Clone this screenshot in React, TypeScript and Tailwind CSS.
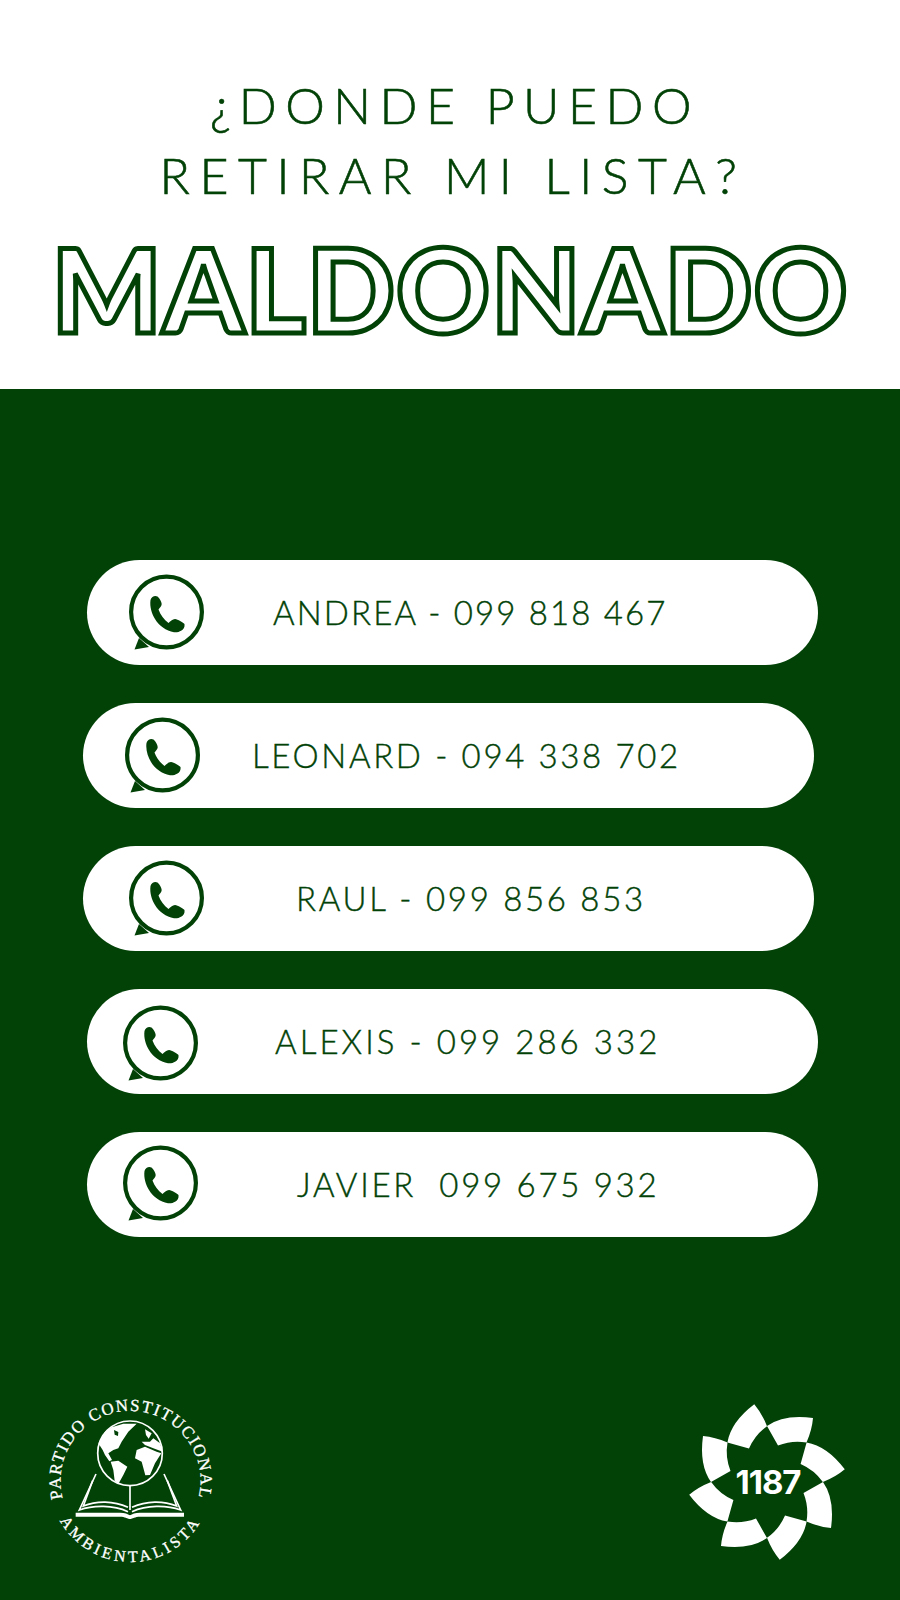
const GREEN = "#024207";

const contacts = [
  { label: "ANDREA - 099 818 467", pill: "ml-[87px]", icon: "ml-[41px]", text: "ml-[69px] tracking-[0.065em]", iconTop: "mt-[2px]" },
  { label: "LEONARD - 094 338 702", pill: "ml-[83px]", icon: "ml-[41px]", text: "ml-[52px] tracking-[0.08em]", iconTop: "mt-[2px]" },
  { label: "RAUL - 099 856 853", pill: "ml-[83px]", icon: "ml-[45px]", text: "ml-[92px] tracking-[0.082em]", iconTop: "mt-[2px]" },
  { label: "ALEXIS - 099 286 332", pill: "ml-[87px]", icon: "ml-[35px]", text: "ml-[77px] tracking-[0.092em]", iconTop: "mt-[6px]" },
  { label: "JAVIER  099 675 932", pill: "ml-[87px]", icon: "ml-[35px]", text: "ml-[99px] tracking-[0.082em]", iconTop: "mt-0" },
];

const WhatsappIcon = ({ className }: { className?: string }) => (
  <svg viewBox="0 0 76 76" className={`overflow-visible ${className}`} fill={GREEN}>
    <path d="M11 62 L6.5 73.5 L21 71 Z" />
    <circle cx="38.5" cy="36" r="35.4" fill="#fff" stroke={GREEN} strokeWidth="4.2" />
    <path d="M22.5 24 C23.5 20.5 27 19 29.5 20.5 C31.5 22 33.5 25.5 33.7 28 C33.8 30 31.5 32 30.5 33.5 C32.5 39 36 43.5 40.5 47 C42 45.5 44.5 43 47 43 C50 43.5 54.5 46 56.5 48 C57 51 55.5 53.5 53.5 54.5 C51 56 49 56.5 46 56.3 C38 55 31 49.5 27 43 C24 38 21.5 31 22.5 24 Z" />
  </svg>
);

const PartyLogo = () => (
  <svg viewBox="0 0 210 190" className="h-[190px] w-[210px]" fill="#fff">
    <defs>
      <path id="arc-top" d="M100.5 171 A70 70 0 1 1 100.5 31 A70 70 0 1 1 100.5 171" />
      <path id="arc-bottom" d="M100.5 20 A81 81 0 1 0 100.5 182 A81 81 0 1 0 100.5 20" />
    </defs>
    <g fontFamily="'Liberation Serif', serif" textAnchor="middle" stroke="#fff" strokeWidth="0.3">
      <text fontSize="17" letterSpacing="1.4">
        <textPath href="#arc-top" startOffset="50%">PARTIDO CONSTITUCIONAL</textPath>
      </text>
      <text fontSize="16" letterSpacing="3.4">
        <textPath href="#arc-bottom" startOffset="50%">AMBIENTALISTA</textPath>
      </text>
    </g>
    {/* book, traced from a 3x crop */}
    <g transform="translate(30 30) scale(0.3333)">
      <g fill="none" stroke="#fff" strokeWidth="5">
        <path d="M108 192 L58 300 C100 285 160 285 204 305" />
        <path d="M98 212 L70 288 C110 272 160 272 204 292" />
        <path d="M312 192 L362 300 C320 285 260 285 216 305" />
        <path d="M322 212 L350 288 C310 272 260 272 216 292" />
        <path d="M210 228 V300" />
      </g>
      <path d="M47 308 H180 C195 308 203 312 210 316 C217 312 225 308 240 308 H372 V320 H240 C225 320 218 326 210 327 C202 326 195 320 180 320 H47 Z" />
    </g>
    {/* globe */}
    <circle cx="100" cy="73.3" r="32.3" fill={GREEN} stroke="#fff" strokeWidth="1.7" />
    <g transform="translate(60 40) scale(0.3333)">
      <path
        fillRule="evenodd"
        d="M25 70 L45 35 L65 22 L100 11 L140 11 L115 35 L95 65 L85 85 L70 90 L55 100 L66 120 L58 124 L45 105 L38 90 Z M72 30 L85 36 L84 48 L74 44 Z"
      />
      <path d="M62 125 L85 122 L112 140 L100 165 L85 192 L74 182 L70 150 Z" />
      <path d="M140 90 L165 80 L200 95 L214 100 L195 130 L180 165 L166 166 L155 125 L135 115 Z" />
      <path d="M155 65 L180 65 L190 55 L210 70 L218 95 L190 85 L165 75 Z" />
      <path d="M165 28 L185 40 L176 56 L168 45 Z" />
    </g>
  </svg>
);

const FlowerLogo = () => (
  <svg viewBox="-87 -92 170 170" className="h-[170px] w-[170px]" fill="#fff">
    {[0, 45, 90, 135, 180, 225, 270, 315].map((angle) => (
      <path
        key={angle}
        transform={`rotate(${angle})`}
        d="M0 -56 Q17 -68 46 -64 Q45 -52 39.5 -39.5 Q25 -42 11 -36.5 Z"
      />
    ))}
    <text
      x="1"
      y="12"
      textAnchor="middle"
      fontFamily="Inter, sans-serif"
      fontWeight="700"
      fontSize="33"
      letterSpacing="-1"
    >
      1187
    </text>
  </svg>
);

export default function App() {
  return (
    <div className="flex h-[1600px] w-[900px] flex-col overflow-hidden font-['Lato',sans-serif]">
      <header className="flex h-[389px] flex-col items-center bg-white pt-[70px] text-[#024207]">
        <p className="pl-[10px] text-[50px] leading-[70px] font-light tracking-[0.17em] whitespace-nowrap [-webkit-text-stroke:0.6px_#024207]">
          ¿DONDE PUEDO
        </p>
        <p className="pl-[6px] text-[50px] leading-[70px] font-light tracking-[0.19em] whitespace-nowrap [-webkit-text-stroke:0.6px_#024207]">
          RETIRAR MI LISTA?
        </p>
        <h1 className="mt-[21px] text-[116px] leading-[116px] font-black tracking-[1px] whitespace-nowrap text-white [-webkit-text-stroke:5px_#024207]">
          MALDONADO
        </h1>
      </header>

      <main className="flex flex-1 flex-col bg-[#024207] pt-[171px]">
        <div className="flex flex-col gap-[38px]">
          {contacts.map((contact) => (
            <div
              key={contact.label}
              className={`flex h-[105px] w-[731px] items-center rounded-full bg-white ${contact.pill}`}
            >
              <WhatsappIcon className={`h-[76px] w-[76px] shrink-0 ${contact.icon} ${contact.iconTop}`} />
              <span className={`text-[33px] font-light whitespace-pre text-[#024207] [-webkit-text-stroke:0.4px_#024207] ${contact.text}`}>
                {contact.label}
              </span>
            </div>
          ))}
        </div>

        <footer className="mt-[143px] flex items-start justify-between pr-[50px] pl-[30px]">
          <PartyLogo />
          <div className="mt-[10px]">
            <FlowerLogo />
          </div>
        </footer>
      </main>
    </div>
  );
}
